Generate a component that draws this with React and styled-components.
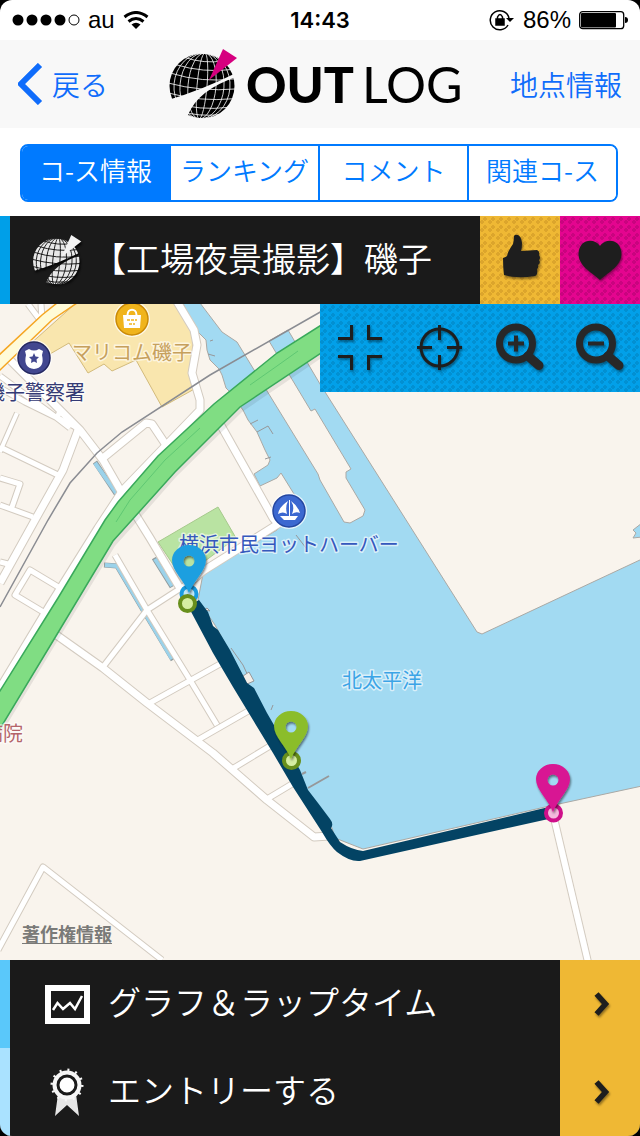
import { useState } from "react";
import styled, { createGlobalStyle } from "styled-components";

const GlobalStyle = createGlobalStyle`
  * {
    box-sizing: border-box;
  }
  body {
    margin: 0;
    background-color: #000;
    font-family: "Noto Sans CJK JP", sans-serif;
    font-weight: 350;
  }
  button {
    border: none;
    padding: 0;
    font: inherit;
    cursor: pointer;
  }
  a {
    color: inherit;
    text-decoration: none;
  }
  svg {
    display: block;
  }
`;

const Screen = styled.div`
  display: flex;
  flex-direction: column;
  min-height: 100vh;
  overflow: hidden;
  border-radius: 12px;
  background-color: #fff;
`;

const StatusBar = styled.div`
  display: grid;
  grid-template-columns: 1fr auto 1fr;
  align-items: center;
  height: 40px;
  padding: 0 12px;
  color: #000;
  font-family: "Liberation Sans", Arial, sans-serif;
  font-size: 24px;
  font-weight: 400;
  > time {
    font-family: Inter, sans-serif;
    font-size: 22px;
    font-weight: 600;
  }
`;
const StatusGroup = styled.div`
  display: flex;
  align-items: center;
  justify-content: ${(props) => (props.$end ? "flex-end" : "flex-start")};
  gap: 8px;
`;

const NavBar = styled.header`
  display: grid;
  grid-template-columns: 1fr auto 1fr;
  align-items: center;
  height: 88px;
  padding: 0 18px;
  background-color: #f8f8f8;
`;
const NavButton = styled.button`
  display: flex;
  align-items: center;
  justify-self: ${(props) => (props.$end ? "end" : "start")};
  gap: 8px;
  background: none;
  color: #0f6cfb;
  font-size: 28px;
  white-space: nowrap;
`;
const Logo = styled.h1`
  display: flex;
  align-items: center;
  gap: 8px;
  width: 304px;
  margin: 0;
  color: #000;
  font-family: Lato, sans-serif;
  font-size: 50px;
  line-height: 56px;
  font-weight: 400;
  > b {
    font-weight: 900;
  }
`;

const TabBar = styled.nav`
  padding: 16px 22px 14px 20px;
`;
const TabList = styled.div`
  display: flex;
  height: 58px;
  overflow: hidden;
  border: 2px solid #007aff;
  border-radius: 8px;
`;
const Tab = styled.button`
  flex: 1;
  padding-bottom: 6px;
  background-color: ${(props) => (props.$active ? "#007aff" : "#fff")};
  color: ${(props) => (props.$active ? "#fff" : "#007aff")};
  font-size: 26px;
  line-height: 32px;
  white-space: nowrap;
  & + & {
    border-left: 2px solid #007aff;
  }
`;

const Row = styled.div`
  display: flex;
  height: 88px;
  background-color: #1a1a1a;
  color: #fff;
  border-left: 10px solid ${(props) => props.$accent};
`;
const RowTitle = styled.h2`
  display: flex;
  flex: 1;
  align-items: center;
  gap: 10px;
  min-width: 0;
  margin: 0;
  padding-left: 22px;
  font-size: 34px;
  font-weight: 350;
  white-space: nowrap;
  > svg {
    filter: drop-shadow(1px 2px 1px #000);
  }
`;
const RowLink = styled.a`
  display: flex;
  flex: 1;
  align-items: center;
  gap: 18px;
  padding-left: 35px;
  font-size: 33px;
  white-space: nowrap;
`;
const RowText = styled.span`
  padding-bottom: 6px;
`;

const Tile = styled.button`
  width: 80px;
  height: 88px;
  color: #1e1e1e;
  background-color: ${(props) => props.$color};
  ${(props) =>
    props.$dots &&
    `
    background-image:
      radial-gradient(circle at 2px 6px, ${props.$dots} 2px, transparent 2px),
      radial-gradient(circle at 5px 3px, ${props.$dots} 2px, transparent 2px);
    background-size: 8px 8px;
  `}
  svg {
    filter: drop-shadow(1px 2px 1px rgba(0, 0, 0, 0.4));
  }
`;

const MapArea = styled.main`
  position: relative;
  display: flex;
  flex: 1;
  min-height: 400px;
  background-color: #f9f4ed;
`;
const MapCanvas = styled.svg`
  flex: 1;
  width: 100%;
  min-width: 0;
  text {
    font-size: 20px;
    font-weight: 400;
    paint-order: stroke;
    stroke: rgba(255, 255, 255, 0.6);
    stroke-width: 3px;
    stroke-linejoin: round;
  }
`;
const MapTools = styled.div`
  position: absolute;
  top: 0;
  right: 0;
  display: flex;
`;
const LegalLink = styled.a`
  position: absolute;
  bottom: 14px;
  left: 22px;
  color: #7a7a78;
  font-size: 18px;
  line-height: 26px;
  font-weight: 700;
  text-decoration: underline;
  text-underline-offset: 2px;
`;

// 地球儀ロゴ
function Globe({ id, size, color, cone, line }) {
  return (
    <svg width={size} height={size} viewBox="0 0 70 70" aria-hidden="true">
      <mask id={id}>
        <circle cx="34" cy="37" r="32.5" fill="#fff" />
        <g fill="none" stroke="#000" strokeWidth={line} transform="rotate(5 34 37)">
          <ellipse cx="34" cy="37" rx="5" ry="33" />
          <ellipse cx="34" cy="37" rx="14" ry="33" />
          <ellipse cx="34" cy="37" rx="22" ry="33" />
          <ellipse cx="34" cy="37" rx="28" ry="33" />
          <path d="M14 10q20 5 40 0M6 18q28 6 56 0M2 27q32 7 64 0M0 37q34 6 68 0M2 47q32 6 64 0M6 56q28 6 56 0M14 64q20 4 40 0" />
        </g>
        <path d="M0 51Q34 41 68 24L68 28Q30 41 20 66L0 70Z" fill="#000" />
      </mask>
      <rect width="70" height="70" fill={color} mask={`url(#${id})`} />
      <path d="M55 0L69 9L41 31Z" fill={cone} />
    </svg>
  );
}

function TileIcon({ name }) {
  const stroke = { fill: "none", stroke: "currentColor", strokeWidth: 3 };
  return (
    <svg width="80" height="88" viewBox="0 0 80 88" aria-hidden="true">
      {name === "like" && (
        <path
          d="M34 20q1-2 4-1q3 1 4 8q0 5-1 8l16-1q3 1 2 5q2 3 0 5q2 3-1 5q1 3-1 4q1 6-2 7q-18 3-31-1q-1-8-1-17q3-1 4-2q1-5 6-12q1-4 1-8Z"
          fill="currentColor"
        />
      )}
      {name === "heart" && (
        <path
          d="M40 30C45 22 61 22 61.500 38C61 50 50 55 40 64C30 55 19 50 18.500 38C19 22 35 22 40 30Z"
          fill="currentColor"
        />
      )}
      {name === "shrink" && (
        <path d="M18 34.500H31.500V21M62 34.500H48.500V21M18 52.500H31.500V66M62 52.500H48.500V66" {...stroke} />
      )}
      {name === "target" && (
        <g {...stroke}>
          <circle cx="39.500" cy="43.500" r="18.500" />
          <path d="M17 43.500H32M47 43.500H62M39.500 21V36M39.500 51V66" />
        </g>
      )}
      {(name === "zoomIn" || name === "zoomOut") && (
        <g fill="none" stroke="#282828">
          <circle cx="36" cy="39.500" r="16.500" strokeWidth="7" />
          <path d="M48 52L59 61.500" strokeWidth="9" strokeLinecap="round" />
          <path d={name === "zoomIn" ? "M28 39.500H44M36 31.500V47.500" : "M28 39.500H44"} strokeWidth="4" />
        </g>
      )}
      {name === "arrow" && <path d="M36.500 34L45.500 44L36.500 54" {...stroke} strokeWidth="5.500" />}
    </svg>
  );
}

const roads = [
  { w: 5, d: "M28 304L43 324M41 304L42 320" },
  { w: 7, d: "M10 360L80 430L103 460L122 493L150 538L181 590" },
  { w: 5, d: "M0 376L57 418L70 428M0 388L25 402L78 428M57 418L60 411" },
  { w: 7, d: "M78 430L63 470L35 520L0 583" },
  { w: 4, d: "M17 413L2 447L0 452" },
  { w: 5, d: "M0 447L58 475M0 478L20 484L12 507M0 505L33 517M0 562L8 564" },
  { w: 7, d: "M103 458L146 423L152 424L166 445" },
  { w: 7, d: "M176 300L194 330L197 345L192 373L200 400L200 410L123 490L98 528L50 605L0 688" },
  { w: 7, d: "M219 422L273 518L278 524L203 571L181 590" },
  { w: 5, d: "M181 588L147 610L103 667" },
  { w: 5, d: "M60 588L30 570L15 595L45 613" },
  { w: 7, d: "M55 634L103 668L147 703L213 753L267 800L314 837L330 836" },
  { w: 5, d: "M115 555L147 610L190 680L217 725M148 704L220 664M196 741L250 710M232 769L275 743M267 799L297 781" },
  { w: 5, d: "M-2 950L43 867L162 960" },
  { w: 6, d: "M554 818L588 962" },
];

const pois = [
  { x: 132, y: 319, color: "#f0b41c", edge: "#c98a08", kind: "shop" },
  { x: 34, y: 358, color: "#42478f", edge: "#242861", kind: "police" },
  { x: 289, y: 511, color: "#3c68d0", edge: "#2446a0", kind: "yacht" },
];

const places = [
  { name: "マリコム磯子", x: 72, y: 360, color: "#c6a05c" },
  { name: "磯子警察署", x: -15, y: 400, color: "#343a75" },
  { name: "横浜市民ヨットハーバー", x: 179, y: 552, color: "#3558bd" },
  { name: "北太平洋", x: 342, y: 688, color: "#3ba4e6" },
  { name: "病院", x: -17, y: 741, color: "#b4656a" },
];

const pins = [
  { x: 189, y: 593, color: "#1f9fe0" },
  { x: 291, y: 759, color: "#8bbd2b" },
  { x: 553, y: 812, color: "#d81493" },
];

function Poi({ x, y, color, edge, kind }) {
  return (
    <g transform={`translate(${x} ${y})`}>
      <circle r="18" fill="#fff" opacity="0.7" />
      <circle r="16" fill={color} stroke={edge} strokeWidth="1.500" />
      {kind === "shop" && (
        <>
          <path d="M-9 -4H9L8 9H-8Z" fill="#fff" />
          <path d="M-4.500 -4C-4.500 -11 4.500 -11 4.500 -4" fill="none" stroke="#fff" strokeWidth="2" />
          <path d="M-5 1H5M-3 5H3" stroke={color} strokeWidth="1.500" strokeDasharray="3 1" />
        </>
      )}
      {kind === "police" && (
        <>
          <path d="M-9 -7L-5 -9Q0 -6 5 -9L9 -7L8 -3Q11 10 0 11Q-11 10 -8 -3Z" fill="#fff" />
          <path d="M0 -5L1.500 -1.500L5 -1L2.500 1.500L3 5L0 3.500L-3 5L-2.500 1.500L-5 -1L-1.500 -1.500Z" fill={color} />
        </>
      )}
      {kind === "yacht" && (
        <path d="M-1 -10Q-10 -4 -11 3Q-6 0 -2 3Q-4 -4 -1 -10ZM2 -10Q6 -4 3 3Q7 0 11 2Q9 -5 2 -10ZM0 -11H1V5H0ZM-9 5H9L6 9H-5Z" fill="#fff" />
      )}
    </g>
  );
}

function CourseMap() {
  return (
    <MapCanvas viewBox="0 304 640 656" preserveAspectRatio="xMidYMid slice" role="img" aria-label="コース地図">
      <defs>
        <filter id="pinShadow" x="-50%" y="-50%" width="200%" height="200%">
          <feDropShadow dx="1" dy="2" stdDeviation="1" floodOpacity="0.5" />
        </filter>
      </defs>
      <g stroke="#aaa9a5" strokeWidth="1" fill="#a2daf2">
        <path
          d="M183 303L200 303L222 332L237 342L248 360L318 474L320 480L344 522L350 523L363 516L365 510L346 478L346 472L351 469L315 409L311 411L269 341L288 330L320 384L477 632L482 634L642 559L642 786L545 807L363 849L335 838L332 828L300 780L275 735L215 625L198 600L203 574L277 530L285 520L300 502L294 494L281 473L277 478L260 486L254 474L268 465L270 460L265 450L257 432L248 420L243 410L237 402L231 393L226 388L222 375L219 369L210 360L207 350L206 340L198 332L188 315Z"
        />
        <path d="M642 523L633 530L636 533L633 538L642 537Z" />
      </g>
      <g fill="none" stroke="#97989a" strokeWidth="1">
        <path d="M210 341L213 340M208 354L215 356M250 424L258 420M257 432L268 426L273 434M265 459L271 457M231 648L243 665L250 680M271 710L273 705M296 535L306 548" />
        <path d="M308 788L329 776M302 774L306 772" strokeWidth="2" />
        <path d="M204 610L210 611L207 608ZM243 676L249 672L254 681L247 684Z" fill="#f3eee8" />
      </g>
      <path
        d="M28 346L76 303H175L194 335L190 375L198 387L162 407L136 360L112 371L104 364L88 373L69 343L50 354L38 344Z"
        fill="#f9e6ae"
        stroke="#d3bb7c"
      />
      <path d="M158 542L218 507L236 538L182 578Z" fill="#b9e3a2" stroke="#a6c98c" />
      <g fill="none">
        <path d="M95 462L117 495M104 565L117 566L143 610L173 660M154 558L172 587" stroke="#929da0" strokeWidth="5" />
        <path d="M95 463L117 494M105 565L117 566L143 610L172 659M155 559L172 586" stroke="#9bd2ea" strokeWidth="4" />
      </g>
      <g fill="none" strokeLinejoin="round">
        {roads.map((road) => (
          <path key={road.d} d={road.d} stroke="#d3cbc0" strokeWidth={road.w + 2} />
        ))}
        {roads.map((road) => (
          <path key={road.d} d={road.d} stroke="#fff" strokeWidth={road.w} />
        ))}
      </g>
      <path d="M-2 356L42 315L57 303H77L52 320L-2 372Z" fill="#fffbd8" stroke="#f5a623" strokeWidth="1.500" />
      <path
        d="M322 311L210 375L122 432L97 453L70 483L48 520L0 607"
        fill="none"
        stroke="#8a8c92"
        strokeWidth="1.500"
      />
      <path d="M345 316L277 357L214 411L160 461L118 507L0 697V736L58 640L115 546L133 526L176 477L242 412L345 342Z" fill="#000" opacity="0.08" />
      <path
        d="M345 310L277 353L214 404L158 456L118 502L105 520L58 598L-2 694V732L56 636L113 541L131 521L175 472L240 407L345 337Z"
        fill="#80dd83"
        stroke="#39a95b"
        strokeWidth="1.500"
      />
      <path d="M298 351L277 366L250 385M200 428L165 460L130 500L116 522" fill="none" stroke="#5fc873" />
      <path
        d="M188 606L213 653L233 687L253 720L273 753L293 787L322 832Q330 846 337 852Q350 862 360 861L553 818V806L363 851Q352 850 340 842L331 828Q334 824 330 819L318 803L308 790L300 770L267 713L254 688L247 683L230 650L218 630L213 626L208 612L199 600Z"
        fill="#034364"
      />
      {places.map((place) => (
        <text key={place.name} x={place.x} y={place.y} fill={place.color}>
          {place.name}
        </text>
      ))}
      {pois.map((poi) => (
        <Poi key={poi.kind} {...poi} />
      ))}
      <circle cx="189" cy="594" r="7.500" fill="#bfe6f8" stroke="#1a9be0" strokeWidth="4" />
      <circle cx="187.500" cy="603.500" r="7.500" fill="#d6eea2" stroke="#688f1c" strokeWidth="4" />
      <circle cx="291.500" cy="760.500" r="7.500" fill="#d6eea2" stroke="#688f1c" strokeWidth="4" />
      <circle cx="553.500" cy="813" r="7.500" fill="#f5b9de" stroke="#cf0f8a" strokeWidth="4" />
      {pins.map((pin) => (
        <path
          key={pin.color}
          transform={`translate(${pin.x} ${pin.y})`}
          d="M0 0C-5 -13 -17 -22 -17 -33A17 15 0 0 1 17 -33C17 -22 5 -13 0 0ZM-5.500 -32A5.500 5.500 0 0 0 5.500 -32A5.500 5.500 0 0 0 -5.500 -32Z"
          fill={pin.color}
          fillRule="evenodd"
          filter="url(#pinShadow)"
        />
      ))}
    </MapCanvas>
  );
}

const tabs = ["コ-ス情報", "ランキング", "コメント", "関連コ-ス"];

const tools = [
  { name: "shrink", label: "全体表示" },
  { name: "target", label: "現在地" },
  { name: "zoomIn", label: "拡大" },
  { name: "zoomOut", label: "縮小" },
];

export default function App() {
  const [active, setActive] = useState(0);

  return (
    <Screen>
      <GlobalStyle />
      <StatusBar>
        <StatusGroup>
          <svg width="68" height="12" viewBox="0 0 68 12" aria-hidden="true">
            {[6, 20, 34, 48].map((cx) => (
              <circle key={cx} cx={cx} cy="6" r="5.500" />
            ))}
            <circle cx="62" cy="6" r="5" fill="none" stroke="#000" />
          </svg>
          <span>au</span>
          <svg width="26" height="18" viewBox="0 0 26 18" fill="none" stroke="#000" strokeWidth="3" aria-hidden="true">
            <path d="M1.500 6Q13 -3 24.500 6M5.500 10.500Q13 4.500 20.500 10.500" />
            <path d="M8.500 13.500Q13 10 17.500 13.500L13 18Z" fill="#000" stroke="none" />
          </svg>
        </StatusGroup>
        <time>14:43</time>
        <StatusGroup $end>
          <svg width="26" height="22" viewBox="0 0 26 22" fill="none" stroke="#000" strokeWidth="1.500" aria-hidden="true">
            <path d="M19 16A9.500 9.500 0 1 1 20 9" />
            <path d="M17 9H25L21 13Z" fill="#000" stroke="none" />
            <rect x="7" y="10" width="8" height="6" fill="#000" />
            <path d="M8.500 10V8Q11 3 13.500 8V10" />
          </svg>
          <span>86%</span>
          <svg width="49" height="20" viewBox="0 0 49 20" aria-hidden="true">
            <rect x="0.700" y="1.700" width="44" height="17" rx="3" fill="none" stroke="#000" strokeWidth="1.300" />
            <rect x="2" y="3" width="35" height="14.500" rx="1" />
            <path d="M46 7Q49 7 49 10Q49 13 46 13Z" />
          </svg>
        </StatusGroup>
      </StatusBar>

      <NavBar>
        <NavButton type="button">
          <svg width="26" height="42" viewBox="0 0 26 42" fill="none" stroke="currentColor" strokeWidth="6" aria-hidden="true">
            <path d="M22 2L3 21L22 40" />
          </svg>
          戻る
        </NavButton>
        <Logo>
          <Globe id="globeHeader" size={70} color="#000" cone="#d6007f" line={0.8} />
          <b>OUT</b>
          <span>LOG</span>
        </Logo>
        <NavButton type="button" $end>
          地点情報
        </NavButton>
      </NavBar>

      <TabBar>
        <TabList>
          {tabs.map((tab, i) => (
            <Tab key={tab} type="button" $active={i === active} onClick={() => setActive(i)}>
              {tab}
            </Tab>
          ))}
        </TabList>
      </TabBar>

      <Row $accent="#009fe8">
        <RowTitle>
          <Globe id="globeTitle" size={50} color="#e8e8e8" cone="#f2f2f2" line={1.2} />
          <RowText>【工場夜景撮影】磯子</RowText>
        </RowTitle>
        <Tile type="button" $color="#efb834" $dots="#dca52c" aria-label="いいね">
          <TileIcon name="like" />
        </Tile>
        <Tile type="button" $color="#e4058f" $dots="#c9047f" aria-label="お気に入り">
          <TileIcon name="heart" />
        </Tile>
      </Row>

      <MapArea>
        <CourseMap />
        <MapTools>
          {tools.map((tool) => (
            <Tile key={tool.name} type="button" $color="#02a0e9" $dots="#0290d2" aria-label={tool.label}>
              <TileIcon name={tool.name} />
            </Tile>
          ))}
        </MapTools>
        <LegalLink href="#legal">著作権情報</LegalLink>
      </MapArea>

      <Row $accent="#5ac8fa">
        <RowLink href="#graph">
          <svg width="45" height="39" viewBox="0 0 45 39" fill="none" stroke="#fff" aria-hidden="true">
            <rect x="3" y="3" width="39" height="33" strokeWidth="6" />
            <path d="M8 25L12.500 18L18 24L25 18L30 24L37 11" strokeWidth="2.500" />
          </svg>
          <RowText>グラフ＆ラップタイム</RowText>
        </RowLink>
        <Tile as="a" href="#graph" $color="#efb834" aria-label="グラフを開く">
          <TileIcon name="arrow" />
        </Tile>
      </Row>
      <Row $accent="#aae2ff">
        <RowLink href="#entry">
          <svg width="45" height="50" viewBox="0 0 45 50" aria-hidden="true">
            <path d="M13 27L10 49L22 38L34 49L31 27Z" fill="#e6e6e6" />
            <circle cx="22" cy="18" r="14.500" fill="#f5f5f5" />
            <circle cx="22" cy="18" r="15" fill="none" stroke="#f5f5f5" strokeWidth="3" strokeDasharray="2 5.850" />
            <circle cx="22" cy="18" r="9" fill="#fff" stroke="#1a1a1a" strokeWidth="3" />
          </svg>
          <RowText>エントリーする</RowText>
        </RowLink>
        <Tile as="a" href="#entry" $color="#efb834" aria-label="エントリーを開く">
          <TileIcon name="arrow" />
        </Tile>
      </Row>
    </Screen>
  );
}
